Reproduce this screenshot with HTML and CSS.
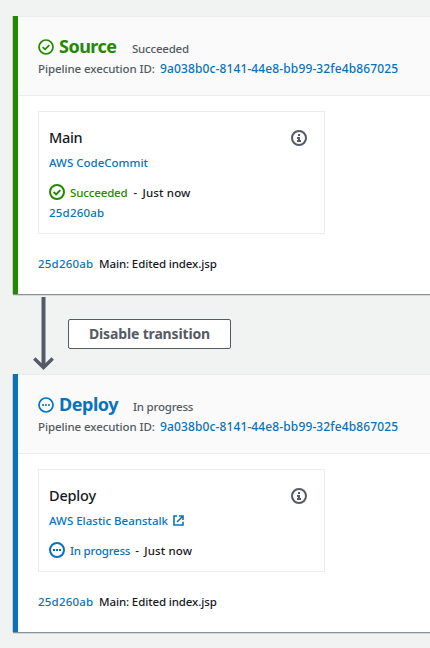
FILE: index.html
```
<!DOCTYPE html>
<html lang="en">
<head>
<meta charset="utf-8">
<title>Pipeline</title>
<link rel="stylesheet" href="styles.css">
</head>
<body>
<svg class="defs" aria-hidden="true">
  <symbol id="check" viewBox="0 0 16 16"><circle cx="8" cy="8" r="7"/><path d="M4.6 8.1l2.5 2.3 4.2-4.3"/></symbol>
  <symbol id="progress" viewBox="0 0 16 16"><circle cx="8" cy="8" r="7"/><path d="M4 8h2M7 8h2M10 8h2"/></symbol>
  <symbol id="info" viewBox="0 0 16 16"><circle cx="8" cy="8" r="7"/><path d="M7 5h2M6 8h2.9M8 7.2V11M6 11h4"/></symbol>
  <symbol id="external" viewBox="0 0 11 11"><path d="M4.2 1H1v9h9V6.8M6 1h4v4M9.8 1.2L4 7"/></symbol>
</svg>
<main class="pipeline">
  <section class="stage stage-success">
    <header class="stage-header">
      <div class="stage-title">
        <svg class="icon"><use href="#check"/></svg>
        <h2 class="name name-source">Source</h2>
        <span class="state">Succeeded</span>
      </div>
      <div class="execution"><span class="label">Pipeline execution ID:</span><a class="link execution-id">9a038b0c-8141-44e8-bb99-32fe4b867025</a></div>
    </header>
    <div class="stage-body">
      <article class="action">
        <div class="action-head"><h3 class="action-name action-main">Main</h3><svg class="icon info"><use href="#info"/></svg></div>
        <div class="provider"><a class="link">AWS CodeCommit</a></div>
        <div class="status"><svg class="icon"><use href="#check"/></svg><span class="status-text">Succeeded</span><span class="dash">-</span><span class="time">Just now</span></div>
        <div class="revision"><a class="link hash">25d260ab</a></div>
      </article>
      <div class="commit"><a class="link hash">25d260ab</a><span class="message">Main: Edited index.jsp</span></div>
    </div>
  </section>
  <div class="transition">
    <svg class="arrow" viewBox="0 0 22 74"><path d="M10.5 0v70"/><path class="head" d="M1.3 61.5l9.2 9 9.2-9"/></svg>
    <button class="button">Disable transition</button>
  </div>
  <section class="stage stage-progress">
    <header class="stage-header">
      <div class="stage-title">
        <svg class="icon"><use href="#progress"/></svg>
        <h2 class="name name-deploy">Deploy</h2>
        <span class="state">In progress</span>
      </div>
      <div class="execution"><span class="label">Pipeline execution ID:</span><a class="link execution-id">9a038b0c-8141-44e8-bb99-32fe4b867025</a></div>
    </header>
    <div class="stage-body">
      <article class="action">
        <div class="action-head"><h3 class="action-name">Deploy</h3><svg class="icon info"><use href="#info"/></svg></div>
        <div class="provider"><a class="link">AWS Elastic Beanstalk</a><svg class="external"><use href="#external"/></svg></div>
        <div class="status"><svg class="icon"><use href="#progress"/></svg><span class="status-text">In progress</span><span class="dash">-</span><span class="time">Just now</span></div>
      </article>
      <div class="commit"><a class="link hash">25d260ab</a><span class="message">Main: Edited index.jsp</span></div>
    </div>
  </section>
</main>
</body>
</html>
```
FILE: styles.css
```
* { box-sizing: border-box; }
body {
  margin: 0;
  background: #f1f3f3;
  color: #16191f;
  font: 500 11.5px/20px "Noto Sans", sans-serif;
  white-space: nowrap;
}
h2, h3 { margin: 0; }
svg { fill: none; stroke: currentColor; flex: none; }
.defs { position: absolute; width: 0; height: 0; }
.pipeline { padding: 16px 0 0 13px; height: 648px; overflow: hidden; }

.stage {
  background: #fff;
  border-left: 5px solid var(--accent);
  box-shadow: 0 1px 0 #879196, 0 2px 0 #d5dbdb, -1px 0 0 #c9cece;
}
.stage-success { --accent: #248900; height: 278px; }
.stage-progress { --accent: #0972bd; height: 258px; }
.stage-header {
  height: 80px;
  padding: 18px 20px 0;
  background: #fafafa;
  border-top: 1px solid #eaeded;
  border-bottom: 1px solid #eaeded;
}
.stage-title { display: flex; height: 24px; color: var(--accent); }
.icon { width: 16px; height: 16px; stroke-width: 2; }
.stage-title .icon { margin-top: 4px; stroke-width: 1.7; }
.name { margin-left: 5px; font-size: 18px; line-height: 22px; font-weight: 700; }
.name-source { width: 57px; letter-spacing: -.5px; }
.name-deploy { width: 59px; letter-spacing: -.45px; }
.state { margin-left: 16px; line-height: 28px; color: #545b64; letter-spacing: -.22px; }
.stage-progress .state { margin-left: 15px; }
.execution { display: flex; color: #545b64; }
.label { width: 122px; letter-spacing: -.1px; }
.link { color: #0972bd; }
.execution-id { font-size: 12px; letter-spacing: .12px; }

.stage-body { padding: 15px 20px 0; }
.action {
  width: 287px;
  padding: 15px 17px 10px 10px;
  border: 1px solid #eaeded;
}
.action-head { display: flex; justify-content: space-between; height: 26px; }
.action-name { font-size: 14.5px; line-height: 20px; font-weight: 500; letter-spacing: -.2px; }
.action-main { letter-spacing: -.35px; }
.info { margin-top: 3px; color: #545b64; }
.provider { display: flex; height: 20px; margin-bottom: 10px; }
.external { width: 11px; height: 11px; margin: 4px 0 0 5px; color: #0972bd; stroke-width: 1.6; }
.status { display: flex; height: 20px; }
.status .icon { margin: 1px 5px 0 0; color: var(--accent); }
.status-text { color: var(--accent); letter-spacing: -.22px; }
.stage-success .status-text { letter-spacing: -.15px; }
.dash { width: 9px; margin-left: 6px; }
.stage-progress .dash { margin-left: 5px; }
.time { letter-spacing: .14px; }
.revision { height: 20px; }
.hash { letter-spacing: .2px; }
.commit { display: flex; margin-top: 20px; }
.commit .hash { width: 61px; }
.message { letter-spacing: -.12px; }

.transition { display: flex; height: 80px; padding: 3px 0 0 20px; color: #545b64; }
.arrow { width: 22px; height: 74px; stroke-width: 4; }
.head { stroke-width: 3.4; }
.button {
  width: 163px;
  height: 30px;
  margin: 22px 0 0 13px;
  padding: 0;
  border: 1px solid #545b64;
  border-radius: 2px;
  background: #fff;
  color: #545b64;
  font: 700 14px/28px "Noto Sans", sans-serif;
  letter-spacing: -.15px;
}
```
